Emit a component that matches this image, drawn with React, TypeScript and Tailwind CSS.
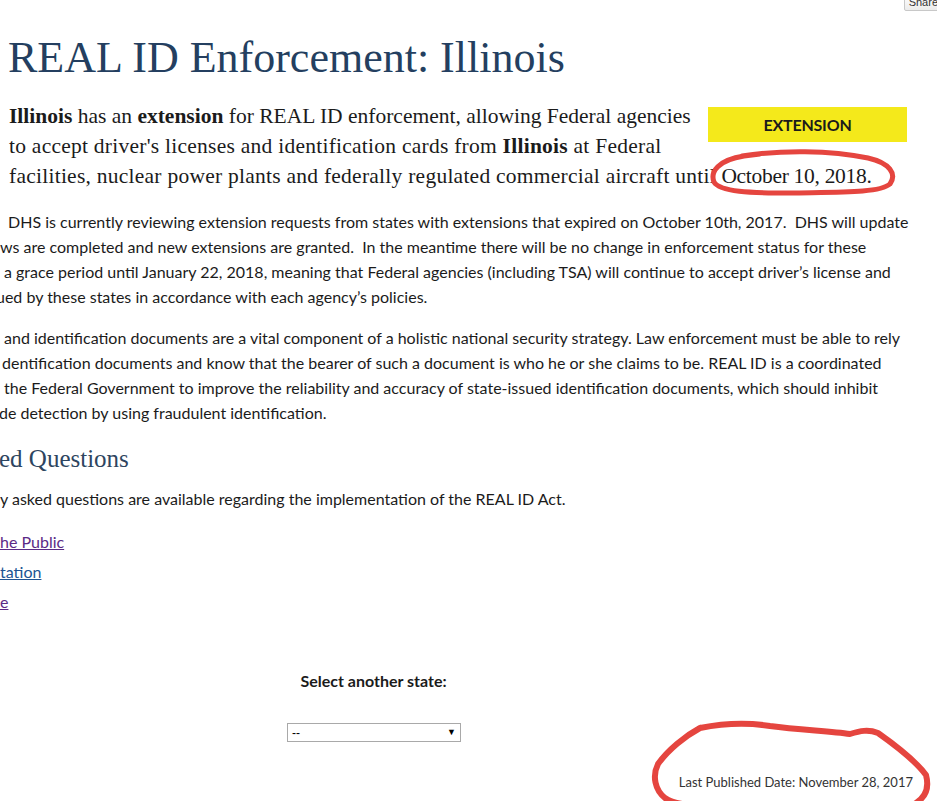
import React from "react";

const serif = { fontFamily: '"Liberation Serif", "DejaVu Serif", serif' };

export default function App() {
  return (
    <div
      className="relative w-[937px] h-[801px] overflow-hidden bg-white text-[#1b1b1b]"
      style={{ fontFamily: 'Lato, "Liberation Sans", sans-serif' }}
    >
      {/* Share button */}
      <div className="absolute right-[-6px] top-[-7px] h-[18px] px-[4px] border border-[#c8c8c8] rounded-[2px] bg-gradient-to-b from-[#ffffff] to-[#ececec] text-[11px] leading-[16px] text-[#333] font-['Liberation_Sans',sans-serif]">
        Share
      </div>

      <div className="pt-[34px]">
        <h1 className="pl-[8px] text-[44px] leading-[48px] text-[#243f60] font-normal whitespace-nowrap" style={serif}>
          REAL ID Enforcement: Illinois
        </h1>

        <div className="mt-[19px] flex items-start">
          <div className="pl-[9px] w-[708px] text-[21.5px] leading-[30px] text-[#1b1b1b]" style={serif}>
            <div className="whitespace-nowrap">
              <b>Illinois</b> has an <b>extension</b> for REAL ID enforcement, allowing Federal agencies
            </div>
            <div className="whitespace-nowrap tracking-[0.25px]">
              to accept driver's licenses and identification cards from <b>Illinois</b> at Federal
            </div>
            <div className="whitespace-nowrap">
              <span className="tracking-[0.25px]">facilities, nuclear power plants and federally regulated commercial aircraft until</span>{" "}
              <span className="tracking-[-0.3px]">October 10, 2018.</span>
            </div>
          </div>
          <div className="mt-[6px] w-[199px] h-[35px] bg-[#f4e91b] flex items-center justify-center text-[16px] font-bold tracking-[-0.2px] text-[#1b1b1b]">
            EXTENSION
          </div>
        </div>

        <div className="mt-[18px] text-[16px] leading-[25px] whitespace-pre">
          <div className="pl-[8px]">DHS is currently reviewing extension requests from states with extensions that expired on October 10th, 2017.  DHS will update</div>
          <div className="ml-[0px]">ws are completed and new extensions are granted.  In the meantime there will be no change in enforcement status for these</div>
          <div className="pl-[4px]">a grace period until January 22, 2018, meaning that Federal agencies (including TSA) will continue to accept driver’s license and</div>
          <div className="ml-[-4px]">ued by these states in accordance with each agency’s policies.</div>
        </div>

        <div className="mt-[16px] text-[16px] leading-[25px] whitespace-pre">
          <div className="pl-[4px]">and identification documents are a vital component of a holistic national security strategy. Law enforcement must be able to rely</div>
          <div className="pl-[2px]">dentification documents and know that the bearer of such a document is who he or she claims to be. REAL ID is a coordinated</div>
          <div className="pl-[4px]">the Federal Government to improve the reliability and accuracy of state-issued identification documents, which should inhibit</div>
          <div className="ml-[-1px]">de detection by using fraudulent identification.</div>
        </div>

        <h2 className="mt-[18px] ml-[-1px] text-[25px] leading-[32px] text-[#2e4560] font-normal whitespace-nowrap" style={serif}>
          ed Questions
        </h2>

        <p className="mt-[11px] text-[16px] leading-[25px] whitespace-nowrap">
          y asked questions are available regarding the implementation of the REAL ID Act.
        </p>

        <div className="mt-[16px] text-[16px] leading-[30px]">
          <div><a className="underline text-[#5b2a86]" href="#">he Public</a></div>
          <div><a className="underline text-[#205493]" href="#">tation</a></div>
          <div><a className="underline text-[#5b2a86]" href="#">e</a></div>
        </div>

        <div className="mt-[52px] flex flex-col items-start pl-[287px]">
          <div className="w-[173px] text-center text-[16px] leading-[24px] font-bold whitespace-nowrap">Select another state:</div>
          <div className="mt-[30px] w-[174px] h-[19px] border border-[#a9a9a9] bg-white flex items-center justify-between px-[4px] text-[12px] text-black font-['Liberation_Sans',sans-serif]">
            <span className="leading-none">--</span>
            <span className="text-[9px] leading-none">▼</span>
          </div>
        </div>

        <div className="mt-[30px] pr-[24px] flex justify-end text-[13px] leading-[20px] text-[#333] whitespace-nowrap">
          Last Published Date: November 28, 2017
        </div>
      </div>

      {/* red annotation marks */}
      <svg className="absolute left-0 top-0 pointer-events-none" width="937" height="801" viewBox="0 0 937 801" fill="none">
        <path
          d="M742 156 C 780 150, 830 150, 868 158 C 890 163, 897 174, 890 184 C 880 193, 840 192, 790 193 C 750 193, 720 192, 714 182 C 710 172, 718 160, 744 156 L 760 154"
          stroke="#e5453f"
          strokeWidth="5"
          strokeLinecap="round"
          strokeLinejoin="round"
        />
        <path
          d="M700 728 C 720 724, 745 722, 770 726 C 800 730, 830 731, 850 734 C 860 731, 868 729, 878 733 C 895 745, 915 760, 926 775 C 930 790, 924 798, 916 803 M700 728 C 685 736, 668 750, 658 764 C 652 776, 655 790, 665 798 C 675 805, 690 805, 700 806"
          stroke="#e5453f"
          strokeWidth="6"
          strokeLinecap="round"
          strokeLinejoin="round"
        />
      </svg>
    </div>
  );
}
